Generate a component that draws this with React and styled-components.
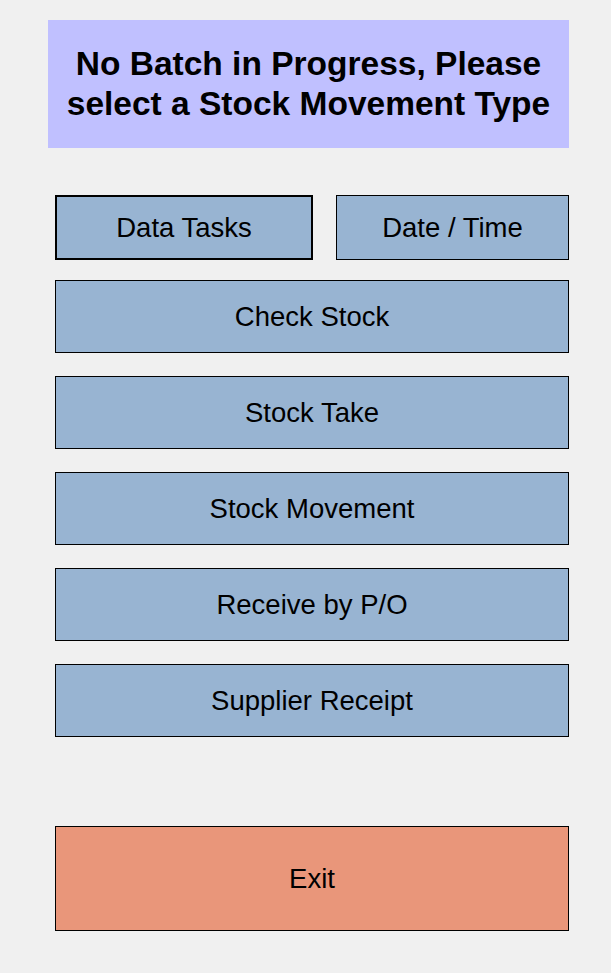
import React from "react"
import styled, { createGlobalStyle } from "styled-components"

const GlobalStyle = createGlobalStyle`
  html, body {
    margin: 0;
    padding: 0;
    background: #f0f0f0;
  }
  * {
    box-sizing: border-box;
  }
`

const Screen = styled.div`
  width: 611px;
  height: 973px;
  background: #f0f0f0;
  padding-top: 20px;
  font-family: "Liberation Sans", Arial, sans-serif;
`

const Banner = styled.div`
  margin-left: 48px;
  width: 521px;
  height: 128px;
  background: #c0c0ff;
  display: flex;
  align-items: center;
  justify-content: center;
  text-align: center;

  h1 {
    margin: 0;
    font-size: 33.5px;
    font-weight: bold;
    line-height: 40px;
    color: #000;
  }
`

const Menu = styled.div`
  margin: 47px 0 0 55px;
  width: 514px;
  display: flex;
  flex-direction: column;
`

const TopRow = styled.div`
  display: flex;
  gap: 23px;
  margin-bottom: 20px;
`

const MenuButton = styled.button`
  width: ${(p) => p.$width || "100%"};
  height: ${(p) => p.$height || "73px"};
  margin-bottom: ${(p) => p.$gap || "0"};
  background: ${(p) => (p.$danger ? "#e9967a" : "#98b4d2")};
  border: ${(p) => (p.$focused ? "2px" : "1px")} solid #000;
  border-radius: 0;
  padding: 0;
  font-family: "Liberation Sans", Arial, sans-serif;
  font-size: 27.5px;
  color: #000;
  cursor: pointer;
`

const Spacer = styled.div`
  height: 89px;
`

const App = () => {
  return (
    <Screen>
      <GlobalStyle />
      <Banner>
        <h1>
          No Batch in Progress, Please
          <br />
          select a Stock Movement Type
        </h1>
      </Banner>
      <Menu>
        <TopRow>
          <MenuButton $width="258px" $height="65px" $focused>
            Data Tasks
          </MenuButton>
          <MenuButton $width="233px" $height="65px">
            Date / Time
          </MenuButton>
        </TopRow>
        <MenuButton $gap="23px">Check Stock</MenuButton>
        <MenuButton $gap="23px">Stock Take</MenuButton>
        <MenuButton $gap="23px">Stock Movement</MenuButton>
        <MenuButton $gap="23px">Receive by P/O</MenuButton>
        <MenuButton>Supplier Receipt</MenuButton>
        <Spacer />
        <MenuButton $height="105px" $danger>
          Exit
        </MenuButton>
      </Menu>
    </Screen>
  )
}

export default App
